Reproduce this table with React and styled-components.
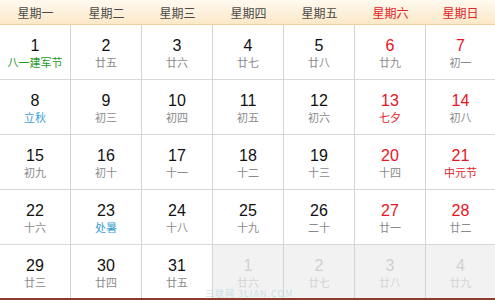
import React from "react";
import styled, { createGlobalStyle } from "styled-components";

const GlobalStyle = createGlobalStyle`
  html, body {
    margin: 0;
    padding: 0;
    background: #fff;
  }
  body {
    font-family: "Liberation Sans", Arial, "Noto Sans CJK SC", sans-serif;
  }
`;

const weekdays = ["星期一", "星期二", "星期三", "星期四", "星期五", "星期六", "星期日"];

// kind: festival (green), term (blue), redfest (red), other month (grey)
const days = [
  [1, "八一建军节", "festival"], [2, "廿五"], [3, "廿六"], [4, "廿七"], [5, "廿八"], [6, "廿九"], [7, "初一"],
  [8, "立秋", "term"], [9, "初三"], [10, "初四"], [11, "初五"], [12, "初六"], [13, "七夕", "redfest"], [14, "初八"],
  [15, "初九"], [16, "初十"], [17, "十一"], [18, "十二"], [19, "十三"], [20, "十四"], [21, "中元节", "redfest"],
  [22, "十六"], [23, "处暑", "term"], [24, "十八"], [25, "十九"], [26, "二十"], [27, "廿一"], [28, "廿二"],
  [29, "廿三"], [30, "廿四"], [31, "廿五"], [1, "廿六", "other"], [2, "廿七", "other"], [3, "廿八", "other"], [4, "廿九", "other"],
];

const lunarColors = {
  festival: "#1f9a1f",
  term: "#3b9fd6",
  redfest: "#e5242b",
  other: "#d4d4d4",
};

function Calendar() {
  return (
    <Wrap>
      <Header>
        {weekdays.map((w, i) => (
          <HeadCell key={w} weekend={i >= 5}>
            {w}
          </HeadCell>
        ))}
      </Header>
      <Grid>
        {days.map(([n, lunar, kind], i) => {
          const col = i % 7;
          const other = kind === "other";
          return (
            <Cell key={i} last={col === 6} muted={other}>
              <Num weekend={col >= 5} muted={other}>
                {n}
              </Num>
              <Lunar kind={kind}>{lunar}</Lunar>
            </Cell>
          );
        })}
      </Grid>
      <Watermark>三联网 3LIAN.COM</Watermark>
    </Wrap>
  );
}

export default function App() {
  return (
    <>
      <GlobalStyle />
      <Calendar />
    </>
  );
}

const Wrap = styled.div`
  position: relative;
  width: 495px;
  height: 300px;
  overflow: hidden;
  border-bottom: 2px solid #8e3b2c;
  box-sizing: border-box;
`;

const Header = styled.div`
  display: grid;
  grid-template-columns: repeat(6, 71px) 69px;
  height: 25px;
  box-sizing: border-box;
  background: linear-gradient(#fffaf0, #fce8c8);
  border-bottom: 1px solid #f2cf9c;
`;

const HeadCell = styled.div`
  display: flex;
  align-items: center;
  justify-content: center;
  font-size: 12px;
  color: ${(p) => (p.weekend ? "#e0222a" : "#4a4a4a")};
  font-family: "Noto Sans CJK SC", sans-serif;
`;

const Grid = styled.div`
  display: grid;
  grid-template-columns: repeat(6, 71px) 69px;
  grid-auto-rows: 55px;
`;

const Cell = styled.div`
  display: flex;
  flex-direction: column;
  align-items: center;
  padding-top: 12px;
  box-sizing: border-box;
  background: ${(p) => (p.muted ? "#f2f2f2" : "#fff")};
  border-bottom: 1px solid #d9d9d9;
  border-right: ${(p) => (p.last ? "none" : "1px solid #d4d4d4")};
`;

const Num = styled.div`
  font-size: 16px;
  line-height: 18px;
  color: ${(p) => (p.muted ? "#d0d0d0" : p.weekend ? "#e5141e" : "#111")};
`;

const Lunar = styled.div`
  margin-top: 1px;
  font-size: 11px;
  line-height: 12px;
  font-family: "Noto Sans CJK SC", sans-serif;
  color: ${(p) => lunarColors[p.kind] || "#8a8a8a"};
`;

const Watermark = styled.div`
  position: absolute;
  left: 205px;
  bottom: 0;
  font-size: 9px;
  line-height: 9px;
  letter-spacing: 1px;
  color: rgba(150, 200, 210, 0.45);
  font-family: "Noto Sans CJK SC", sans-serif;
`;
